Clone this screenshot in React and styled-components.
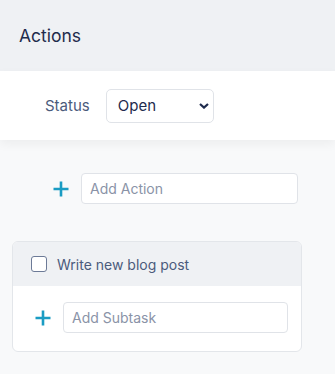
import React from "react";
import styled, { createGlobalStyle } from "styled-components";

const GlobalStyle = createGlobalStyle`
  body {
    margin: 0;
    background: #f8f9fa;
    font-family: Inter, "Noto Sans", sans-serif;
  }
  * {
    box-sizing: border-box;
  }
`;

function PlusIcon() {
  return (
    <svg width="16" height="16" viewBox="0 0 16 16">
      <path d="M8 0.5V15.5M0.5 8H15.5" stroke="#1a9cc3" strokeWidth="2.6" />
    </svg>
  );
}

function Chevron() {
  return (
    <svg width="10" height="6" viewBox="0 0 10 6">
      <path d="M1 1L5 4.6L9 1" stroke="#1e2b4d" strokeWidth="2.2" fill="none" />
    </svg>
  );
}

function App() {
  return (
    <>
      <GlobalStyle />
      <Header>
        <Title>Actions</Title>
      </Header>
      <FilterBar>
        <Label>Status</Label>
        <SelectWrap>
          <Select defaultValue="open">
            <option value="open">Open</option>
            <option value="closed">Closed</option>
          </Select>
          <ChevronSpot>
            <Chevron />
          </ChevronSpot>
        </SelectWrap>
      </FilterBar>
      <Main>
        <AddRow $indent={41} $width={217}>
          <PlusIcon />
          <TextInput placeholder="Add Action" />
        </AddRow>
        <Card>
          <CardHeader>
            <Check type="checkbox" />
            <TaskName>Write new blog post</TaskName>
          </CardHeader>
          <CardBody>
            <AddRow $indent={22} $width={225}>
              <PlusIcon />
              <TextInput placeholder="Add Subtask" />
            </AddRow>
          </CardBody>
        </Card>
      </Main>
    </>
  );
}

const Header = styled.div`
  height: 71px;
  background: #eff1f4;
  display: flex;
  align-items: center;
  padding-left: 19px;
`;

const Title = styled.h1`
  margin: 0;
  font-size: 17.5px;
  font-weight: 400;
  color: #1f2c4c;
`;

const FilterBar = styled.div`
  height: 69px;
  background: #fff;
  display: flex;
  align-items: center;
  padding-left: 45px;
  gap: 16px;
  box-shadow: 0 4px 10px rgba(0, 0, 0, 0.05);
  position: relative;
`;

const Label = styled.span`
  font-size: 15px;
  color: #4b5b7c;
`;

const SelectWrap = styled.div`
  position: relative;
  width: 108px;
  height: 34px;
`;

const Select = styled.select`
  appearance: none;
  width: 100%;
  height: 100%;
  border: 1px solid #e0e3e8;
  border-radius: 5px;
  background: #fff;
  padding: 0 24px 0 11px;
  font-family: inherit;
  font-size: 15px;
  color: #1e2b4d;
  outline: none;
`;

const ChevronSpot = styled.span`
  position: absolute;
  right: 5px;
  top: 14px;
  display: flex;
  pointer-events: none;
`;

const Main = styled.div`
  padding: 33px 34px 20px 12px;
`;

const AddRow = styled.div`
  display: flex;
  align-items: center;
  gap: 12px;
  padding-left: ${(p) => p.$indent}px;

  svg {
    flex-shrink: 0;
  }
  input {
    width: ${(p) => p.$width}px;
  }
`;

const TextInput = styled.input`
  height: 31px;
  border: 1px solid #e0e3e8;
  border-radius: 4px;
  background: #fff;
  padding: 0 8px;
  font-family: inherit;
  font-size: 14px;
  color: #1e2b4d;
  outline: none;

  &::placeholder {
    color: #8a93a7;
  }
`;

const Card = styled.div`
  margin-top: 37px;
  width: 290px;
  border: 1px solid #e3e6ea;
  border-radius: 6px;
  background: #fff;
  overflow: hidden;
`;

const CardHeader = styled.div`
  height: 44px;
  background: #eff1f4;
  display: flex;
  align-items: center;
  gap: 10px;
  padding-left: 18px;
`;

const Check = styled.input`
  appearance: none;
  margin: 0;
  width: 16px;
  height: 16px;
  border: 1.3px solid #6c7a97;
  border-radius: 3px;
  background: #fff;
`;

const TaskName = styled.span`
  font-size: 14px;
  color: #4b5b7c;
`;

const CardBody = styled.div`
  padding: 16px 0 18px;
`;

export default App;
